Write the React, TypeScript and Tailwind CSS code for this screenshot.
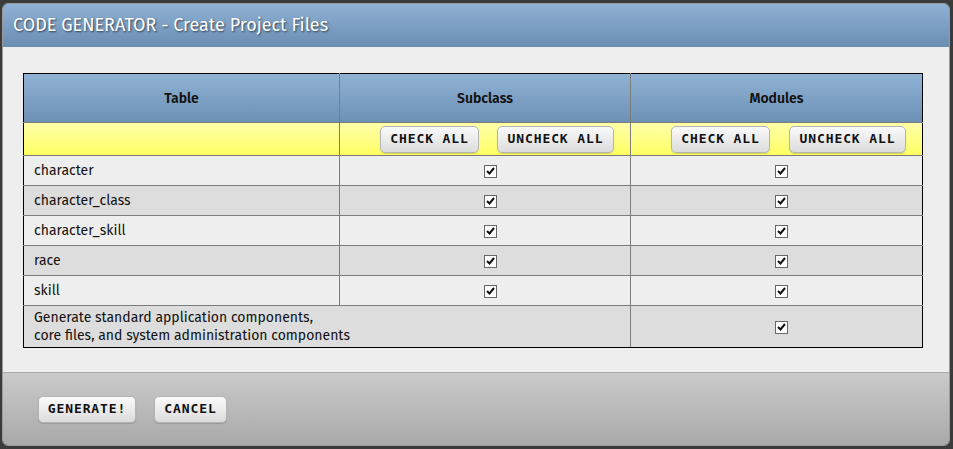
import React from "react";

const rows = ["character", "character_class", "character_skill", "race", "skill"];

function Check() {
  return (
    <span className="inline-flex h-[13px] w-[13px] items-center justify-center border border-[#666] bg-white align-middle">
      <svg width="9" height="8" viewBox="0 0 9 8">
        <path d="M1 4 L3.5 6.5 L8 1" fill="none" stroke="#111" strokeWidth="2" />
      </svg>
    </span>
  );
}

function Btn({ label, w }: { label: string; w: string }) {
  return (
    <button
      className={`${w} h-[27px] rounded-[5px] border border-[#b4b4b4] bg-gradient-to-b from-[#fafafa] to-[#dcdcdc] text-[13px] font-bold tracking-[0.9px] text-[#111] shadow-[0_1px_1px_rgba(0,0,0,0.15)]`}
      style={{ fontFamily: '"DejaVu Sans Mono", monospace' }}
    >
      {label}
    </button>
  );
}

export default function App() {
  return (
    <div className="h-[449px] w-[953px] bg-[#3b3b3b] pl-[2px] pr-[3px] pt-[3px] pb-[3px]" style={{ fontFamily: '"Fira Sans", "Open Sans", "Noto Sans", sans-serif' }}>
      <div className="flex h-full flex-col overflow-hidden rounded-[6px] border border-[#9a9a9a]">
        {/* title */}
        <div className="flex h-[43px] items-center bg-gradient-to-b from-[#8eb1d4] to-[#6a8eb2] pl-[10px]">
          <span className="text-[18px] text-white [text-shadow:1px_1px_2px_rgba(0,0,0,0.6)]">CODE GENERATOR - Create Project Files</span>
        </div>

        {/* body */}
        <div className="flex-1 bg-[#eeeeee] px-[20px] pt-[26px]">
          <table className="w-[900px] border-collapse border border-black text-[14px] text-[#111]">
            <colgroup>
              <col className="w-[316px]" />
              <col className="w-[291px]" />
              <col className="w-[292px]" />
            </colgroup>
            <thead>
              <tr className="h-[49px] bg-gradient-to-b from-[#8fb2d5] to-[#6c90b3]">
                <th className="border border-[#7c7c7c] border-t-black border-l-black font-semibold">Table</th>
                <th className="border border-[#7c7c7c] border-t-black font-semibold">Subclass</th>
                <th className="border border-[#7c7c7c] border-t-black border-r-black font-semibold">Modules</th>
              </tr>
            </thead>
            <tbody>
              <tr className="h-[33px] bg-gradient-to-b from-[#ffffa8] to-[#ffff5c]">
                <td className="border border-[#7c7c7c] border-l-black"></td>
                <td className="border border-[#7c7c7c]">
                  <div className="flex justify-end gap-[18px] pr-[16px]">
                    <Btn label="CHECK ALL" w="w-[99px]" />
                    <Btn label="UNCHECK ALL" w="w-[117px]" />
                  </div>
                </td>
                <td className="border border-[#7c7c7c] border-r-black">
                  <div className="flex justify-end gap-[19px] pr-[16px]">
                    <Btn label="CHECK ALL" w="w-[99px]" />
                    <Btn label="UNCHECK ALL" w="w-[117px]" />
                  </div>
                </td>
              </tr>
              {rows.map((r, i) => (
                <tr key={r} className={`h-[30px] ${i % 2 === 0 ? "bg-[#eeeeee]" : "bg-[#dddddd]"}`}>
                  <td className="border border-[#7c7c7c] border-l-black pl-[10px]">{r}</td>
                  <td className="border border-[#7c7c7c] pl-[10px] text-center"><Check /></td>
                  <td className="border border-[#7c7c7c] border-r-black pl-[10px] text-center"><Check /></td>
                </tr>
              ))}
              <tr className="h-[42px] bg-[#dddddd]">
                <td colSpan={2} className="border border-[#7c7c7c] border-l-black border-b-black pl-[10px] leading-[18px]">
                  Generate standard application components,
                  <br />
                  core files, and system administration components
                </td>
                <td className="border border-[#7c7c7c] border-r-black border-b-black pl-[10px] text-center"><Check /></td>
              </tr>
            </tbody>
          </table>
        </div>

        {/* footer */}
        <div className="flex h-[73px] items-center gap-[18px] border-t border-[#a8a8a8] bg-gradient-to-b from-[#cacaca] to-[#a9a9a9] pl-[35px]">
          <Btn label="GENERATE!" w="w-[98px]" />
          <Btn label="CANCEL" w="w-[73px]" />
        </div>
      </div>
    </div>
  );
}
